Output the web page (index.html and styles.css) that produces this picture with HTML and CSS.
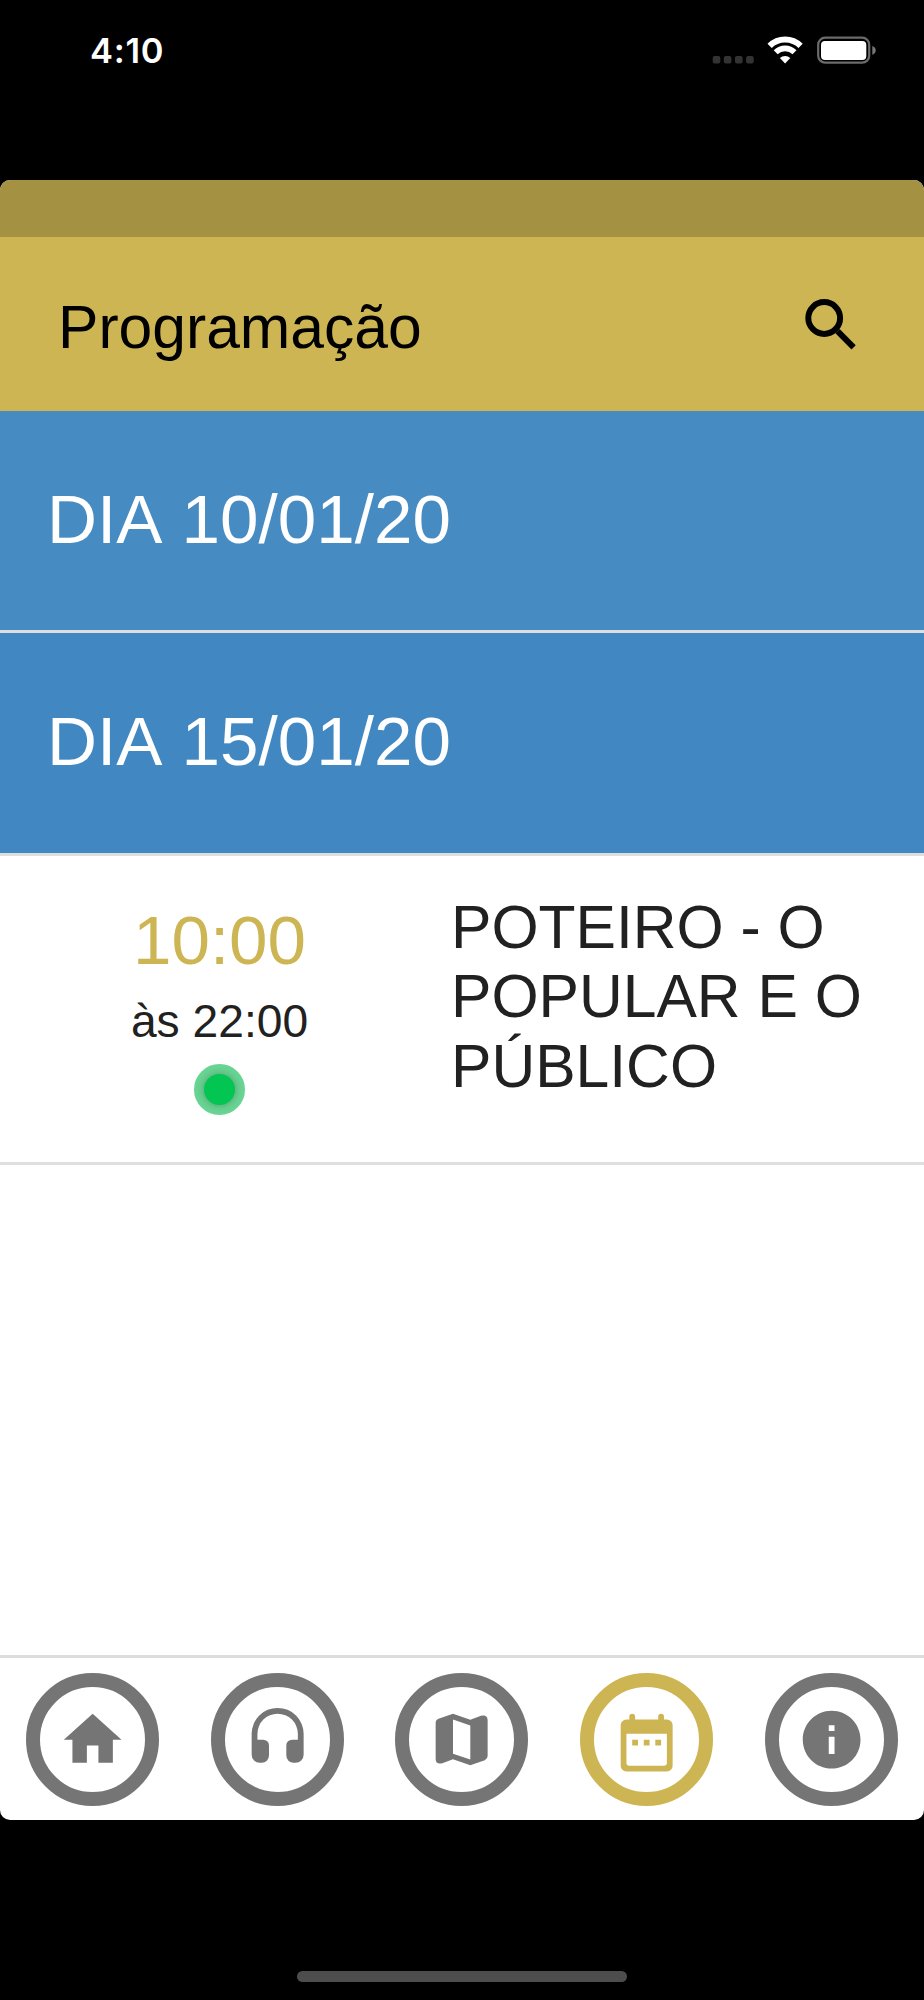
FILE: index.html
```html
<!DOCTYPE html>
<html lang="pt-BR">
<head>
  <meta charset="UTF-8">
  <meta name="viewport" content="width=device-width, initial-scale=1.0">
  <title>Programação</title>
  <link rel="stylesheet" href="styles.css">
</head>
<body>
  <div class="status-bar">
    <span class="clock">4:10</span>
    <svg class="status-icons" width="170" height="40" viewBox="0 0 170 40">
      <!-- signal -->
      <g fill="#333">
        <rect x="2.7" y="26" width="7.6" height="7.6" rx="2"/>
        <rect x="13.8" y="26" width="7.6" height="7.6" rx="2"/>
        <rect x="25" y="26" width="7.6" height="7.6" rx="2"/>
        <rect x="36.1" y="26" width="7.6" height="7.6" rx="2"/>
      </g>
      <!-- wifi -->
      <g fill="none" stroke="#fff">
        <path d="M59.6 15.9a22 22 0 0 1 31 0" stroke-width="6"/>
        <path d="M65.7 22.3a13.3 13.3 0 0 1 18.8 0" stroke-width="5.6"/>
      </g>
      <path d="M75.1 33.4l-5.2-5.3a7.4 7.4 0 0 1 10.4 0z" fill="#fff"/>
      <!-- battery -->
      <rect x="108.2" y="7.7" width="51" height="25" rx="7" fill="none" stroke="#6b6b6b" stroke-width="2.2"/>
      <rect x="111" y="11" width="45.3" height="19" rx="4" fill="#fff"/>
      <path d="M162.3 16c4.6 1.4 4.6 7.3 0 8.7z" fill="#777"/>
    </svg>
  </div>

  <div class="app">
    <div class="app-strip"></div>
    <header class="toolbar">
      <h1>Programação</h1>
      <svg class="search" width="54" height="54" viewBox="0 0 54 54" fill="none" stroke="#000" stroke-width="6">
        <circle cx="20.2" cy="20" r="15.9"/>
        <path d="M33.5 33.2L49.6 49.4"/>
      </svg>
    </header>

    <main class="list">
      <div class="day">DIA 10/01/20</div>
      <div class="day day-open">DIA 15/01/20</div>
      <div class="event">
        <div class="event-time">
          <span class="start">10:00</span>
          <span class="end">às 22:00</span>
          <span class="dot"></span>
        </div>
        <div class="event-title">POTEIRO - O POPULAR E O PÚBLICO</div>
      </div>
    </main>

    <nav class="tabs">
      <a class="tab">
        <svg viewBox="0 0 24 24"><path d="M10 20v-6h4v6h5v-8h3L12 3 2 12h3v8z"/></svg>
      </a>
      <a class="tab">
        <svg viewBox="0 0 24 24"><path d="M12 1a9 9 0 0 0-9 9v7.2A2.8 2.8 0 0 0 5.8 20H6.5A2.5 2.5 0 0 0 9 17.5V14a2 2 0 0 0-2-2H5v-2a7 7 0 0 1 14 0v2h-2a2 2 0 0 0-2 2v3.5A2.5 2.5 0 0 0 17.5 20h.7a2.8 2.8 0 0 0 2.8-2.8V10a9 9 0 0 0-9-9z"/></svg>
      </a>
      <a class="tab">
        <svg viewBox="0 0 24 24"><path fill-rule="evenodd" d="M9 3l6 2.1 3.7-1.4Q21 3.2 21 5.3V17.700Q21 18.7 20 19.1L15 20.9 9 18.8 5.3 20.2Q3 20.7 3 18.7V6.200Q3 5.2 4 4.8zM9 5.050V16.900l6 2V7.100z"/></svg>
      </a>
      <a class="tab active">
        <svg viewBox="0 0 24 24"><path fill-rule="evenodd" d="M6 5V4a1 1 0 0 1 2 0v1h8V4a1 1 0 0 1 2 0v1h1a2 2 0 0 1 2 2v14a2 2 0 0 1-2 2H5a2 2 0 0 1-2-2V7a2 2 0 0 1 2-2zM5 10v10a1 1 0 0 0 1 1h12a1 1 0 0 0 1-1V10zM7 12h2v2H7zM11 12h2v2h-2zM15 12h2v2h-2z"/></svg>
      </a>
      <a class="tab">
        <svg viewBox="0 0 24 24"><path d="M12 2C6.48 2 2 6.48 2 12s4.480 10 10 10 10-4.480 10-10S17.520 2 12 2zm1 15h-2v-6h2v6zm0-8h-2V7h2v2z"/></svg>
      </a>
    </nav>
  </div>

  <div class="home-indicator"></div>
</body>
</html>
```
FILE: styles.css
```css
* {
  box-sizing: border-box;
}

body {
  margin: 0;
  height: 2000px;
  background: #000;
  font-family: "Liberation Sans", Arial, sans-serif;
  display: flex;
  flex-direction: column;
  overflow: hidden;
}

.status-bar {
  height: 180px;
  padding: 30px 44px 0 90px;
  display: flex;
  justify-content: space-between;
  align-items: flex-start;
}

.clock {
  color: #fff;
  font-family: Inter, sans-serif;
  font-size: 34.5px;
  font-weight: 600;
  letter-spacing: 0.7px;
  line-height: 42px;
}

.app {
  height: 1640px;
  background: #fff;
  border-radius: 10px;
  overflow: hidden;
  display: flex;
  flex-direction: column;
}

.app-strip {
  height: 57px;
  background: #a59142;
}

.toolbar {
  height: 174px;
  padding: 5px 66px 0 58px;
  background: #ceb553;
  display: flex;
  justify-content: space-between;
  align-items: center;
}

.toolbar h1 {
  margin: 0;
  font-size: 60.6px;
  font-weight: 400;
  line-height: 70px;
}

.search {
  margin-bottom: 3px;
}

.list {
  flex: 1;
}

.day {
  height: 222px;
  padding: 0 47px;
  background: #478bc3;
  border-bottom: 3px solid #dcdee0;
  color: #fff;
  font-size: 69.2px;
  font-kerning: none;
  line-height: 217px;
}

.day-open {
  height: 223px;
  background: #4188c2;
}

.event {
  height: 308.5px;
  padding-top: 37px;
  border-bottom: 3px solid #dfdfdf;
  color: #212121;
  display: grid;
  grid-template-columns: 439px 1fr;
  column-gap: 12px;
}

.event-time {
  padding-top: 6px;
  display: flex;
  flex-direction: column;
  align-items: center;
}

.start {
  color: #ceb553;
  font-size: 69.2px;
  line-height: 82px;
}

.end {
  margin: 13px 0 16px;
  font-size: 46.2px;
  line-height: 54px;
}

.dot {
  width: 51px;
  height: 51px;
  border: 10px solid #69d694;
  border-radius: 50%;
  background: #69d694;
  display: flex;
}

.dot::before {
  content: "";
  flex: 1;
  border-radius: 50%;
  background: #02c552;
  box-shadow: 0 0 9px rgba(60, 90, 70, 0.5);
}

.event-title {
  padding-right: 40px;
  font-size: 60.6px;
  line-height: 69.4px;
}

.tabs {
  height: 165px;
  border-top: 3px solid #dcdcdc;
  display: grid;
  grid-template-columns: repeat(5, 1fr);
  place-items: center;
}

.tab {
  width: 133px;
  height: 133px;
  border: 14px solid #757575;
  border-radius: 50%;
  color: #757575;
  display: flex;
  align-items: center;
  justify-content: center;
}

.tab svg {
  width: 69.3px;
  height: 69.3px;
  margin-top: 1px;
  flex: none;
  fill: currentColor;
}

.tab.active {
  border-color: #ceb553;
  color: #ceb553;
}

.home-indicator {
  width: 330px;
  height: 11px;
  margin: 151px auto 0;
  border-radius: 6px;
  background: #4d4d4d;
}
```
